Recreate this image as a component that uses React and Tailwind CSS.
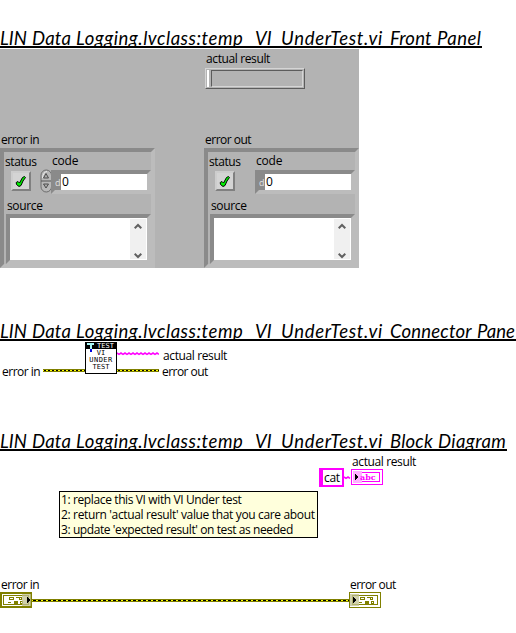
import React from "react";

const FACE = "font-['Open_Sans','Noto_Sans',sans-serif] whitespace-pre";

function Label({ children, className = "" }) {
  return (
    <div className={className}>
      <div className={`${FACE} h-[16px] text-[12px] leading-[18px] text-black`}>{children}</div>
    </div>
  );
}

function Heading({ children, width }) {
  return (
    <h1 className={`flex h-[23px] overflow-hidden whitespace-pre border-b-2 border-black font-['Lato',sans-serif] text-[18.5px] leading-[27px] italic text-black ${width}`}>
      <span className="w-[32px] shrink-0">LIN </span>
      <span className="w-[44px] shrink-0 tracking-[0.2px]">Data </span>
      <span className="w-[179px] shrink-0 tracking-[0.53px]">Logging.lvclass:temp_</span>
      <span className="w-[26px] shrink-0">VI_</span>
      <span className="w-[109px] shrink-0 tracking-[0.72px]">UnderTest.vi </span>
      {children}
    </h1>
  );
}

const BEVEL = "border-4 border-t-[#8a8a8a] border-l-[#8a8a8a] border-r-[#bcbcbc] border-b-[#bcbcbc]";

function CheckLed() {
  return (
    <div className="flex h-5 w-5 items-center justify-center border-2 border-t-[#cdcdcd] border-l-[#cdcdcd] border-r-[#808080] border-b-[#808080] bg-[#d4d4d4]">
      <svg width="12" height="13" viewBox="0 0 12 13">
        <path d="M1.2 7.5 L3 6.5 L4.5 8 L7.5 2.5 L9.5 1.5 L10.5 2.5 L8 6 L6 10.5 L4 11.5 L1.5 9.5 Z" fill="#00f000" stroke="#000" strokeWidth="1" />
      </svg>
    </div>
  );
}

function Spinner() {
  return (
    <svg width="12" height="24" viewBox="0 0 12 24" className="shrink-0">
      <rect x="1" y="1" width="10.5" height="22" rx="5.25" fill="#b8b8b8" stroke="#6c6c6c" />
      <path d="M2.5 9 Q3 3 7 2.5" stroke="#eee" fill="none" />
      <path d="M1 12 H11" stroke="#555" />
      <path d="M3.5 9 L6 4.5 L8.5 9 Z M3.5 15 L6 19 L8.5 15 Z" fill="#aaa" stroke="#444" strokeWidth=".9" />
    </svg>
  );
}

function Scrollbar() {
  return (
    <div className="mt-px mr-px flex h-10 w-4 flex-col items-center justify-between bg-[#f0f0f0] pt-1">
      <svg width="8" height="7" viewBox="0 0 8 7"><path d="M.7 5.3 L4 2 L7.3 5.3" fill="none" stroke="#606060" strokeWidth="2" /></svg>
      <svg width="8" height="7" viewBox="0 0 8 7"><path d="M.7 1.7 L4 5 L7.3 1.7" fill="none" stroke="#606060" strokeWidth="2" /></svg>
    </div>
  );
}

function ErrorCluster({ control }) {
  return (
    <div className={`h-[120px] w-[155px] ${BEVEL}`}>
      <div className="flex h-[44px]">
        <div className="w-[32px] pt-px pl-px">
          <Label className="tracking-[-0.4px]">status</Label>
          <div className="mt-[2px] ml-[6px]"><CheckLed /></div>
        </div>
        <div className="flex w-[15px] pt-[17px] pl-[4px]">{control && <Spinner />}</div>
        <div className="w-[100px]">
          <Label className="pl-px tracking-[-0.2px]">code</Label>
          <div className={`mt-[2px] flex h-[24px] ${BEVEL}`}>
            <div className={`${FACE} w-[6px] shrink-0 bg-[#8a8a8a] text-[9px] leading-[17px] text-[#e0e0e0]`}>d</div>
            <div className={`${FACE} grow bg-white pl-px text-[12px] leading-[16px] text-black`}>0</div>
          </div>
        </div>
      </div>
      <Label className="pt-px pl-[3px] tracking-[-0.35px]">source</Label>
      <div className={`mt-px ml-[2px] flex h-[50px] w-[145px] ${BEVEL}`}>
        <div className="flex grow justify-end bg-white"><Scrollbar /></div>
      </div>
    </div>
  );
}

function FrontPanel() {
  return (
    <div className="h-[219px] w-[359px] bg-[#b3b3b3] pt-px">
      <Label className="ml-[206px] tracking-[-0.38px]">actual result</Label>
      <div className="mt-[2px] ml-[205px] flex h-[21px] w-[100px] border border-t-[#d5d5d5] border-l-[#d5d5d5] border-r-[#5c5c5c] border-b-[#5c5c5c] py-px pr-px">
        <div className="mx-px w-[2px] bg-white" />
        <div className="ml-px grow border border-t-[#5c5c5c] border-l-[#5c5c5c] border-r-[#d5d5d5] border-b-[#d5d5d5]" />
      </div>
      <div className="mt-[42px] flex gap-[49px]">
        <div>
          <Label className="ml-px tracking-[-0.5px]">error in</Label>
          <div className="mt-px"><ErrorCluster control /></div>
        </div>
        <div>
          <Label className="ml-px tracking-[-0.5px]">error out</Label>
          <div className="mt-px"><ErrorCluster /></div>
        </div>
      </div>
    </div>
  );
}

function ErrorWire({ length, className = "", dash = "2 2" }) {
  return (
    <svg className={className} width={length} height="3" viewBox={`0 0 ${length} 3`} shapeRendering="crispEdges">
      <rect width={length} height="3" fill="#808000" />
      <path d={`M0 1.5H${length}`} stroke="#ffff00" />
      <path d={`M1 1.5H${length}`} stroke="#000" strokeWidth="1" strokeDasharray={dash} />
    </svg>
  );
}

function StringWire({ length }) {
  const points = [];
  for (let x = 0; x <= length; x += 2) points.push(`${x},${(x / 2) % 2 ? 2.3 : 1}`);
  return (
    <svg className="block" width={length} height="4" viewBox={`0 0 ${length} 4`}>
      <polyline points={points.join(" ")} fill="none" stroke="#ff00ff" strokeWidth="1.5" />
    </svg>
  );
}

function ViIcon() {
  return (
    <div className="h-8 w-8 border border-black bg-white text-center font-['DejaVu_Sans_Mono',monospace] text-[7px] leading-[7px] text-black">
      <div className="flex h-[6px] bg-black pl-px text-white">
        <svg width="7" height="9" viewBox="0 0 7 9" className="shrink-0" shapeRendering="crispEdges">
          <path d="M0 0h7v2H5v5H3V2H0z" fill="#a8f8f8" />
          <path d="M3 6h2v3H3z" fill="#0000e0" />
        </svg>
        <span className="ml-[3px] leading-[6px]">TEST</span>
      </div>
      <div className="pt-px">VI</div>
      <div className="tracking-[0.5px]">UNDER</div>
      <div>TEST</div>
    </div>
  );
}

function ConnectorPane() {
  return (
    <div className="flex h-[32px] pl-[2px]">
      <Label className="w-[41px] pt-[21px] tracking-[-0.5px]">error in</Label>
      <div className="w-[42px] pt-[27px]"><ErrorWire length={42} className="block" /></div>
      <ViIcon />
      <div className="w-[42px] pt-[10px]">
        <StringWire length={42} />
        <ErrorWire length={42} className="mt-[13px] block" />
      </div>
      <div className="pt-[5px]">
        <Label className="ml-[4px] tracking-[-0.38px]">actual result</Label>
        <Label className="ml-[3px] tracking-[-0.55px]">error out</Label>
      </div>
    </div>
  );
}

function ErrorTerminal({ output }) {
  return (
    <svg className="block" width="32" height="16" viewBox="0 0 32 16" shapeRendering="crispEdges">
      <rect width="32" height="16" fill="#808000" />
      <rect x={output ? 1 : 2} y={output ? 1 : 2} width={output ? 30 : 28} height={output ? 14 : 12} fill="#fff" />
      <rect x="3.5" y="3.5" width="25" height="9" fill="#fff" stroke="#808000" />
      <g transform={output ? "translate(2 0)" : undefined} fill="none" stroke="#808000">
        <path d="M8 10.5h3M9.5 5.5h4v2h-4zM16 5.5h3M19.5 7.5v-2h2v2z" />
        <path d="M14 9h4v3h-4z" fill="#808000" stroke="none" />
        <path d="M20.5 9.5h2v2h-2z" />
      </g>
      <rect x={output ? 1 : 22} y="2" width="9" height="12" fill="#c0c090" fillOpacity=".75" />
      <path d={output ? "M4 5h1v1h1v1h1v2H6v1H5v1H4z" : "M27 5h1v1h1v1h1v2h-1v1h-1v1h-1z"} fill="#000" />
    </svg>
  );
}

function StringTerminal() {
  return (
    <div className="flex h-[16px] w-[32px] border border-[#ff00ff] bg-white p-[2px]">
      <div className="relative flex h-[10px] w-[26px] items-center border border-[#ff00ff] pl-[5px]">
        <div className="absolute -top-[2px] -left-[2px] h-[12px] w-[9px] bg-[#ffb0ff]" />
        <svg className="absolute top-px left-0" width="4" height="6" viewBox="0 0 4 6" shapeRendering="crispEdges">
          <path d="M0 0h1v1h1v1h1v2H2v1H1v1H0z" fill="#000" />
        </svg>
        <span className="relative -mt-px font-['DejaVu_Serif',serif] text-[8px] leading-[8px] font-bold text-[#ff00ff]">abc</span>
      </div>
    </div>
  );
}

function BlockDiagram() {
  return (
    <div className="relative h-[182px] w-[516px]">
      <Label className="absolute top-[2px] left-[352px] tracking-[-0.38px]">actual result</Label>
      <div className={`${FACE} absolute top-[17px] left-[319px] h-[19px] w-[25px] border-2 border-l-4 border-[#ff00ff] pl-px text-[12px] leading-[16px] tracking-[-0.3px] text-black`}>cat</div>
      <div className="absolute top-[25px] left-[344px]"><StringWire length={7} /></div>
      <div className="absolute top-[18px] left-[351px]"><StringTerminal /></div>
      <div className={`${FACE} absolute top-[40px] left-[59px] h-[47px] w-[259px] border border-black bg-[#ffffdc] pl-px text-[12px] leading-[15px] text-black`}>
        <div className="tracking-[-0.38px]">1: replace this VI with VI Under test</div>
        <div className="tracking-[-0.35px]">2: return 'actual result' value that you care about</div>
        <div className="tracking-[-0.41px]">3: update 'expected result' on test as needed</div>
      </div>
      <Label className="absolute top-[125px] left-px tracking-[-0.5px]">error in</Label>
      <Label className="absolute top-[125px] left-[350px] tracking-[-0.55px]">error out</Label>
      <div className="absolute top-[141px] left-0"><ErrorTerminal /></div>
      <ErrorWire length={317} dash="3 2" className="absolute top-[148px] left-[32px]" />
      <div className="absolute top-[141px] left-[349px]"><ErrorTerminal output /></div>
    </div>
  );
}

export default function App() {
  return (
    <main className="h-[633px] w-[516px] overflow-hidden bg-white pt-[25px]">
      <Heading width="w-[482px]">
        <span className="w-[47px] shrink-0 tracking-[0.2px]">Front </span>
        <span className="tracking-[0.5px]">Panel</span>
      </Heading>
      <div className="mt-px"><FrontPanel /></div>
      <div className="mt-[50px]">
        <Heading width="w-[516px]">
          <span className="w-[87px] shrink-0 tracking-[0.2px]">Connector </span>
          <span>Pane</span>
        </Heading>
      </div>
      <div className="mt-px"><ConnectorPane /></div>
      <div className="mt-[54px]">
        <Heading width="w-[507px]">
          <span className="w-[48px] shrink-0 tracking-[0.2px]">Block </span>
          <span className="tracking-[0.4px]">Diagram</span>
        </Heading>
      </div>
      <BlockDiagram />
    </main>
  );
}
